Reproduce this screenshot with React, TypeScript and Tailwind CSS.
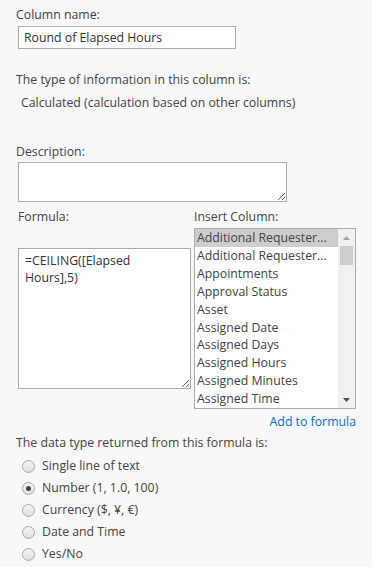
import React from "react";

const rows = [
  "Additional Requester...",
  "Additional Requester...",
  "Appointments",
  "Approval Status",
  "Asset",
  "Assigned Date",
  "Assigned Days",
  "Assigned Hours",
  "Assigned Minutes",
  "Assigned Time",
];

const radios = [
  { label: "Single line of text", checked: false },
  { label: "Number (1, 1.0, 100)", checked: true },
  { label: "Currency ($, ¥, €)", checked: false },
  { label: "Date and Time", checked: false },
  { label: "Yes/No", checked: false },
];

function Radio({ checked }: { checked: boolean }) {
  return (
    <span className="w-[13px] h-[13px] rounded-full border border-[#a9a9a9] bg-gradient-to-b from-[#f6f6f6] to-[#dedede] flex items-center justify-center shrink-0">
      {checked && <span className="w-[5px] h-[5px] rounded-full bg-[#444]" />}
    </span>
  );
}

export default function App() {
  return (
    <div
      className="w-[372px] h-[567px] overflow-hidden bg-[#f8f8f8] text-[#444] text-[12.3px] leading-[18px] pl-[16px] pt-[6px]"
      style={{ fontFamily: '"Segoe UI", "Open Sans", sans-serif' }}
    >
      <div>Column name:</div>
      <div className="mt-[2px] ml-[2px] w-[218px] h-[23px] border border-[#ababab] bg-white flex items-center px-[5px] text-[#333]">
        Round of Elapsed Hours
      </div>
      <div className="mt-[22px]">The type of information in this column is:</div>
      <div className="mt-[5px] pl-[5px]">Calculated (calculation based on other columns)</div>
      <div className="mt-[31px]">Description:</div>
      <textarea
        className="block mt-[1px] ml-[2px] w-[269px] h-[40px] border border-[#ababab] bg-white resize outline-none"
        defaultValue=""
      />
      <div className="mt-[6px] ml-[2px] flex gap-[3px]">
        <div className="w-[173px] flex flex-col">
          <div>Formula:</div>
          <textarea
            readOnly
            className="block mt-[22px] w-[173px] h-[141px] border border-[#ababab] bg-white resize outline-none pl-[6px] pr-[4px] pt-[3px] leading-[17px] text-[#333]"
            defaultValue={"=CEILING([Elapsed\nHours],5)"}
          />
        </div>
        <div className="w-[162px] flex flex-col">
          <div>Insert Column:</div>
          <div className="mt-[2px] h-[181px] border border-[#ababab] bg-white flex">
            <div className="flex-1 flex flex-col">
              {rows.map((r, i) => (
                <div
                  key={i}
                  className={`h-[18px] pl-[2px] whitespace-nowrap overflow-hidden ${i === 0 ? "bg-[#cdcdcd]" : ""}`}
                >
                  {r}
                </div>
              ))}
            </div>
            <div className="w-[17px] bg-[#f0f0f0] flex flex-col items-center">
              <div className="h-[17px] flex items-center justify-center">
                <svg width="7" height="4" viewBox="0 0 7 4">
                  <polygon points="3.5,0 7,4 0,4" fill="#a3a3a3" />
                </svg>
              </div>
              <div className="w-[13px] h-[19px] bg-[#cdcdcd]" />
              <div className="flex-1" />
              <div className="h-[17px] flex items-center justify-center">
                <svg width="7" height="4" viewBox="0 0 7 4">
                  <polygon points="0,0 7,0 3.5,4" fill="#505050" />
                </svg>
              </div>
            </div>
          </div>
          <div className="mt-[4px] text-right text-[#0072c6]">Add to formula</div>
        </div>
      </div>
      <div className="mt-[3px]">The data type returned from this formula is:</div>
      <div className="mt-[3px] flex flex-col">
        {radios.map((r) => (
          <div key={r.label} className="h-[22px] flex items-center gap-[7px] ml-[6px]">
            <Radio checked={r.checked} />
            <span>{r.label}</span>
          </div>
        ))}
      </div>
    </div>
  );
}
